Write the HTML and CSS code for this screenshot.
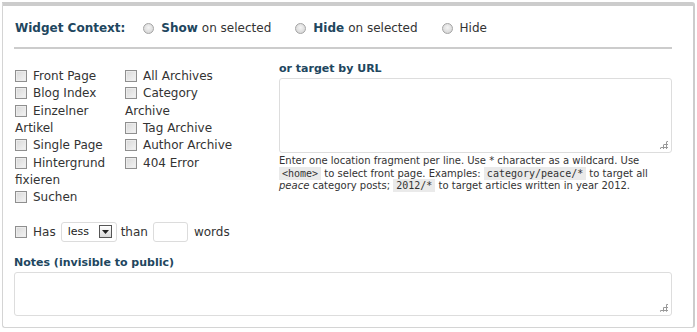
FILE: index.html
```html
<!DOCTYPE html>
<html>
<head>
<meta charset="utf-8">
<link rel="stylesheet" href="styles.css">
</head>
<body>
<div class="wc">
  <div class="head">
    <h4 class="title">Widget Context:</h4>
    <label class="opt"><span class="radio"></span><b>Show</b> on selected</label>
    <label class="opt"><span class="radio"></span><b>Hide</b> on selected</label>
    <label class="opt"><span class="radio"></span>Hide</label>
  </div>
  <div class="body">
    <div class="left">
      <div class="lists">
        <ul class="list l1">
          <li><span class="cb"></span>Front Page</li>
          <li><span class="cb"></span>Blog Index</li>
          <li><span class="cb"></span>Einzelner Artikel</li>
          <li><span class="cb"></span>Single Page</li>
          <li><span class="cb"></span>Hintergrund fixieren</li>
          <li><span class="cb"></span>Suchen</li>
        </ul>
        <ul class="list l2">
          <li><span class="cb"></span>All Archives</li>
          <li><span class="cb"></span>Category Archive</li>
          <li><span class="cb"></span>Tag Archive</li>
          <li><span class="cb"></span>Author Archive</li>
          <li><span class="cb"></span>404 Error</li>
        </ul>
      </div>
      <div class="words">
        <span class="cb"></span><span class="w-has">Has</span>
        <span class="select"><span class="sel-text">less</span><span class="sel-btn"><svg width="7" height="4" viewBox="0 0 7 4"><path d="M0 0h7L3.5 4z" fill="#222"/></svg></span></span>
        <span class="w-than">than</span>
        <span class="num"></span>
        <span class="w-words">words</span>
      </div>
    </div>
    <div class="right">
      <h4 class="label">or target by URL</h4>
      <div class="ta ta-url"><span class="grip"></span></div>
      <p class="help">Enter one location fragment per line. Use * character as a wildcard. Use <code>&lt;home&gt;</code> to select front page. Examples: <code>category/peace/*</code> to target all <em>peace</em> category posts; <code>2012/*</code> to target articles written in year 2012.</p>
    </div>
  </div>
  <h4 class="label notes-label">Notes (invisible to public)</h4>
  <div class="ta ta-notes"><span class="grip"></span></div>
</div>
</body>
</html>
```

FILE: styles.css
```css
html, body { margin: 0; padding: 0; background: #fff; }
body { font-family: "DejaVu Sans", Verdana, sans-serif; font-size: 12px; color: #333; }

.wc {
  margin: 2px 2px 0 2px;
  height: 326px;
  box-sizing: border-box;
  border: 1px solid #d4d4d4;
  border-top: 4px solid #cccccc;
  border-right: 2px solid #cccccc;
  border-radius: 0 3px 3px 3px;
  padding: 0 21px 0 11px;
}

.head {
  display: flex;
  align-items: center;
  height: 43px;
  box-sizing: border-box;
  padding-top: 3px;
  border-bottom: 2px solid #cccccc;
  padding-left: 1px;
}
.title { margin: 0 18px 0 0; font-size: 12px; font-weight: bold; color: #21465e; }
.opt { display: flex; align-items: center; margin-right: 24px; color: #333; }
.opt b { color: #21465e; margin-right: 4px; }
.radio {
  display: inline-block; width: 11px; height: 11px; border-radius: 50%;
  border: 1px solid #a4a4a4; box-sizing: border-box;
  background: radial-gradient(circle at 50% 40%, #f4f4f4 0%, #dadada 70%, #c8c8c8 100%);
  margin-right: 7px;
}

.body { display: flex; padding-top: 13px; }
.left { width: 264px; padding-left: 1px; padding-top: 6px; }
.right { flex: 1; }

.lists { display: flex; }
.list { list-style: none; margin: 0; padding: 0; line-height: 17.35px; }
.l1 { width: 110px; }
.l2 { width: 114px; }
.cb {
  display: inline-block; width: 12px; height: 12px; box-sizing: border-box;
  border: 1px solid #8f8f8f;
  background: linear-gradient(135deg, #d8d8d8, #f4f4f4);
  vertical-align: -2px; margin-right: 6px;
  box-shadow: inset 0 0 0 1px #ececec;
}

.words { display: flex; align-items: center; margin-top: 15px; height: 20px; }
.words .cb { margin-right: 6px; }
.select {
  display: inline-flex; align-items: center; justify-content: space-between;
  width: 56px; height: 20px; box-sizing: border-box;
  border: 1px solid #dcdcdc; border-radius: 3px; margin: 0 4px 0 5px;
  padding: 0 4px 0 6px; font-size: 11px; color: #222;
}
.sel-btn {
  width: 13px; height: 13px; box-sizing: border-box; border: 1px solid #555;
  background: linear-gradient(#fff, #d8d8d8); display: flex; align-items: center; justify-content: center;
}
.num { display: inline-block; width: 35px; height: 20px; box-sizing: border-box; border: 1px solid #dcdcdc; border-radius: 3px; margin: 0 6px 0 5px; }

.label { margin: 0 0 3px 0; font-size: 11px; font-weight: bold; color: #21465e; }
.ta { position: relative; box-sizing: border-box; border: 1px solid #dddddd; border-radius: 3px; background: #fff; }
.ta-url { height: 75px; }
.ta-notes { height: 44px; }
.grip {
  position: absolute; right: 3px; bottom: 3px; width: 9px; height: 9px;
  background:
    radial-gradient(circle, #999 1px, transparent 1.1px) 0 0 / 3px 3px;
  clip-path: polygon(100% 0, 100% 100%, 0 100%);
}
.help { margin: 2px 0 0 0; font-size: 10px; line-height: 12.5px; color: #333; }
.help code { font-family: "DejaVu Sans Mono", monospace; font-size: 10px; background: #eaeaea; padding: 1px 3px; }
.notes-label { margin-top: 14px; }
```
